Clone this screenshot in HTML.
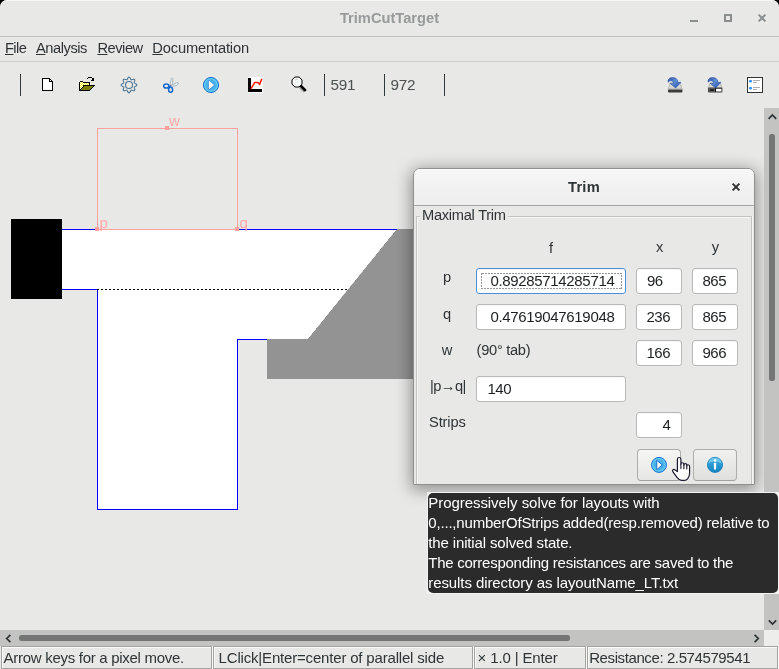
<!DOCTYPE html>
<html lang="en">
<head>
<meta charset="utf-8">
<title>TrimCutTarget</title>
<style>
*{box-sizing:border-box;margin:0;padding:0}
html,body{width:779px;height:669px;overflow:hidden;background:#000}
body{position:relative;font-family:"Liberation Sans","DejaVu Sans",sans-serif;font-size:14.67px;color:#2e3436}
#root{position:absolute;left:0;top:0;width:779px;height:669px;overflow:hidden;will-change:transform;background:#e8e8e7;border-radius:7px 7px 0 0}
.abs{position:absolute}
.t{position:absolute;white-space:pre;line-height:1}
/* window chrome */
#titlebar{left:0;top:0;width:779px;height:37px;background:#e8e8e7;border-bottom:1px solid #bfbfbc;border-radius:7px 7px 0 0;box-shadow:inset 0 1px 0 #f6f6f5}
#title{left:0;width:779px;top:10.5px;text-align:center;font-weight:bold;color:#979a9a;font-size:14.67px}
#menubar{left:0;top:37px;width:779px;height:25px;border-bottom:1px solid #cfcfcd}
.menu{top:41.1px;font-size:14.67px;color:#2e3436}
.menu u{text-decoration:underline;text-underline-offset:1.2px;text-decoration-thickness:1px}
.sep{position:absolute;width:1px;background:#33383a;top:74px;height:22px}
.num{top:76.9px;font-size:15.3px;letter-spacing:-0.35px;color:#4a4f50}
/* canvas */
#canvas{left:0;top:108px;width:764px;height:522px;overflow:hidden}
/* scrollbars */
#vsb{left:764px;top:108px;width:15px;height:522px;background:#c3c3c1}
#hsb{left:0;top:630px;width:764px;height:16px;background:#c3c3c1}
#corner{left:764px;top:630px;width:15px;height:16px;background:#ededec}
.thumb{position:absolute;background:#747676;border-radius:2.5px}
/* status */
.cell{position:absolute;top:646px;height:23px;border:1px solid #a3a3a1;background:#e8e8e7;box-shadow:inset 1px 1px 0 #fbfbfa,1px 1px 0 #fbfbfa}
.cell span{position:absolute;top:3px;white-space:pre;line-height:1;font-size:15px;color:#2e3436}

/* dialog */
#dlg{left:413px;top:168px;width:342px;height:317px;border:1px solid #8f8f8d;border-radius:7px 7px 0 0;background:#e8e8e7;overflow:hidden}
#dlgshadow{left:413px;top:168px;width:342px;height:317px;border-radius:7px 7px 0 0;box-shadow:0 3px 16px 2px rgba(0,0,0,0.38)}
#dlgin{position:absolute;left:-414px;top:-169px;width:779px;height:669px}
#dtb{left:414px;top:169px;width:340px;height:37px;background:linear-gradient(#f7f7f7,#f2f2f2 40%,#eeeeee);border-top:1px solid #fdfdfd;border-bottom:1px solid #a3a3a1}
.lbl{position:absolute;white-space:pre;line-height:1;font-size:14.67px;color:#2e3436}
.fld{position:absolute;height:26px;background:#fff;border:1px solid #b9b9b6;border-radius:3px;box-shadow:inset 0 1px 0 rgba(0,0,0,0.04)}
.fld.foc{border-color:#4a90d9}
.fld span{position:absolute;top:4.3px;white-space:pre;line-height:1;font-size:15px;color:#1c1f20}
.btn{position:absolute;top:449px;width:44px;height:32px;border:1px solid #adadab;border-bottom-color:#a0a09e;border-radius:4px;background:linear-gradient(#f1f1f0,#dfdfde)}

#tipf{left:427px;top:492px;width:352px;height:102px;background:#f3f3f2}
#tip{left:428px;top:493px;width:350px;height:100px;background:#2b2b2b;border-radius:5px}
#tip div{position:absolute;left:0.3px;white-space:pre;line-height:1;font-size:15px;color:#fff}
</style>
</head>
<body>
<div id="root">
<!-- TITLE BAR -->
<div id="titlebar" class="abs"></div>
<div id="title" class="t">TrimCutTarget</div>
<!-- MENU BAR -->
<div id="menubar" class="abs"></div>
<div class="t menu" style="left:5px;letter-spacing:-0.6px"><u>F</u>ile</div>
<div class="t menu" style="left:36px;letter-spacing:-0.45px"><u>A</u>nalysis</div>
<div class="t menu" style="left:97.4px;letter-spacing:-0.45px"><u>R</u>eview</div>
<div class="t menu" style="left:152.3px;letter-spacing:-0.15px"><u>D</u>ocumentation</div>
<!-- TOOLBAR -->
<div id="toolbar" class="abs" style="left:0;top:62px;width:779px;height:46px">
</div>
<div class="sep" style="left:20px"></div>
<div class="sep" style="left:324px"></div>
<div class="sep" style="left:384px"></div>
<div class="sep" style="left:444px"></div>
<div class="t num" style="left:330.6px">591</div>
<div class="t num" style="left:390.6px">972</div>
<svg class="abs" style="left:0;top:62px" width="779" height="46" viewBox="0 62 779 46">
<defs>
<pattern id="dith" x="0" y="0" width="2" height="2" patternUnits="userSpaceOnUse"><rect width="2" height="2" fill="#ffff00"/><rect x="0" y="0" width="1" height="1" fill="#fff"/><rect x="1" y="1" width="1" height="1" fill="#fff"/></pattern>
<radialGradient id="gp" cx="0.5" cy="0.5" r="0.5"><stop offset="0" stop-color="#3a9ee4"/><stop offset="0.6" stop-color="#49b2ec"/><stop offset="1" stop-color="#6ad4f6"/></radialGradient>
<linearGradient id="ga" x1="0" y1="0" x2="1" y2="1"><stop offset="0" stop-color="#2a4fa8"/><stop offset="0.45" stop-color="#5f8fd0"/><stop offset="1" stop-color="#1d48b4"/></linearGradient>
</defs>
<!-- new document -->
<g shape-rendering="crispEdges">
<path d="M42.5 78.5H49.5L52.5 81.5V90.5H42.5Z" fill="#fff" stroke="#000" stroke-width="1"/>
<rect x="49" y="79" width="1" height="3" fill="#000"/><rect x="49" y="81" width="4" height="1" fill="#000"/>
<rect x="50" y="79" width="1" height="1" fill="#000"/><rect x="51" y="80" width="1" height="1" fill="#000"/>
</g>
<!-- open folder -->
<g shape-rendering="crispEdges">
<rect x="80" y="81" width="3" height="1" fill="#000"/>
<polygon points="79,82 90,82 90,85 95,85 94,86 93,87 92,88 91,89 90,90 90,91 79,91" fill="#000"/>
<polygon points="80,82 83,82 83,83 89,83 89,85 83,85 83,87 82,87 82,88 81,88 81,89 80,89" fill="url(#dith)"/>
<polygon points="84,86 93,86 92,87 91,88 90,89 89,90 81,90 82,89 83,88 84,87" fill="#808000"/>
<rect x="84" y="86" width="9" height="1" fill="#808000"/><rect x="83" y="87" width="9" height="1" fill="#808000"/><rect x="82" y="88" width="9" height="1" fill="#808000"/><rect x="81" y="89" width="9" height="1" fill="#808000"/>
<rect x="88" y="77" width="4" height="1" fill="#000"/><rect x="87" y="78" width="1" height="1" fill="#000"/><rect x="92" y="78" width="1" height="1" fill="#000"/>
<rect x="93" y="78" width="1" height="3" fill="#000"/><rect x="92" y="79" width="1" height="2" fill="#000"/><rect x="91" y="80" width="1" height="1" fill="#000"/>
</g>
<!-- gear -->
<path d="M129.00 77.15 L129.50 77.31 L129.95 77.76 L130.32 78.38 L130.60 79.01 L130.86 79.51 L131.16 79.78 L131.56 79.80 L132.10 79.63 L132.75 79.39 L133.44 79.21 L134.08 79.21 L134.55 79.45 L134.79 79.92 L134.79 80.56 L134.61 81.25 L134.37 81.90 L134.20 82.44 L134.22 82.84 L134.49 83.14 L134.99 83.40 L135.62 83.68 L136.24 84.05 L136.69 84.50 L136.85 85.00 L136.69 85.50 L136.24 85.95 L135.62 86.32 L134.99 86.60 L134.49 86.86 L134.22 87.16 L134.20 87.56 L134.37 88.10 L134.61 88.75 L134.79 89.44 L134.79 90.08 L134.55 90.55 L134.08 90.79 L133.44 90.79 L132.75 90.61 L132.10 90.37 L131.56 90.20 L131.16 90.22 L130.86 90.49 L130.60 90.99 L130.32 91.62 L129.95 92.24 L129.50 92.69 L129.00 92.85 L128.50 92.69 L128.05 92.24 L127.68 91.62 L127.40 90.99 L127.14 90.49 L126.84 90.22 L126.44 90.20 L125.90 90.37 L125.25 90.61 L124.56 90.79 L123.92 90.79 L123.45 90.55 L123.21 90.08 L123.21 89.44 L123.39 88.75 L123.63 88.10 L123.80 87.56 L123.78 87.16 L123.51 86.86 L123.01 86.60 L122.38 86.32 L121.76 85.95 L121.31 85.50 L121.15 85.00 L121.31 84.50 L121.76 84.05 L122.38 83.68 L123.01 83.40 L123.51 83.14 L123.78 82.84 L123.80 82.44 L123.63 81.90 L123.39 81.25 L123.21 80.56 L123.21 79.92 L123.45 79.45 L123.92 79.21 L124.56 79.21 L125.25 79.39 L125.90 79.63 L126.44 79.80 L126.84 79.78 L127.14 79.51 L127.40 79.01 L127.68 78.38 L128.05 77.76 L128.50 77.31Z" fill="none" stroke="#3f6c8e" stroke-width="1.05" stroke-linejoin="round" opacity="0.95"/>
<circle cx="129" cy="85" r="3.5" fill="none" stroke="#3f6c8e" stroke-width="1.05" opacity="0.95"/>
<!-- scissors -->
<path d="M170 85.2L171.3 78.4Q172.2 77.2 172.9 78.6L172.6 85.6Z" fill="#e3edf4" stroke="#8b969c" stroke-width="0.6"/>
<path d="M171 85.4L176.6 82.6Q178.8 82.3 178.6 83.7L176.6 85.6L172 86.4Z" fill="#e3edf4" stroke="#8b969c" stroke-width="0.6"/>
<ellipse cx="166.3" cy="86" rx="2.6" ry="2.1" fill="none" stroke="#1769d2" stroke-width="1.5"/>
<ellipse cx="170.6" cy="89.7" rx="2" ry="2.5" fill="none" stroke="#1769d2" stroke-width="1.5"/>
<path d="M168.6 87.3L171 85.6" stroke="#1769d2" stroke-width="1.3"/>
<!-- play -->
<circle cx="211" cy="85" r="7.6" fill="url(#gp)" stroke="#1f6fd0" stroke-width="1"/>
<path d="M208.8 80.4V89.8L214.2 85Z" fill="#fff" stroke="#1767c8" stroke-width="0.7" stroke-linejoin="round"/>
<path d="M208.8 80.6L214 85L208.8 89.6Z" fill="#fff"/>
<!-- chart -->
<g shape-rendering="crispEdges">
<rect x="248" y="77" width="15" height="16" fill="#fff"/>
<rect x="248" y="78" width="3" height="14" fill="#000"/><rect x="248" y="89" width="14" height="3" fill="#000"/>
</g>
<path d="M251.3 88.2L254.6 82.6H258L259.6 84.4L261.6 79.4" fill="none" stroke="#ff1a00" stroke-width="1.5" stroke-linejoin="round" stroke-linecap="round"/>
<!-- magnifier -->
<path d="M301 86L305.6 90.6" stroke="#9a9a9a" stroke-width="3.4" transform="translate(-0.8 0.8)"/>
<path d="M300.4 85.4L305.8 90.8" stroke="#000" stroke-width="2.6"/>
<path d="M294.93 77.00 L299.07 77.00 L302.00 79.93 L302.00 84.07 L299.07 87.00 L294.93 87.00 L292.00 84.07 L292.00 79.93Z" fill="#f6fbf9" stroke="#000" stroke-width="1"/>
<path d="M295 80.2Q296 79.2 297.6 79.3" fill="none" stroke="#999" stroke-width="0.6"/>
<!-- save -->
<path d="M668.4 89.5L670 83H680.4L682 89.5Z" fill="#d6d6d4" stroke="#a8a8a5" stroke-width="0.7"/>
<rect x="668" y="89.3" width="14.4" height="3.2" rx="1" fill="#3b3b3a"/>
<rect x="668" y="88.6" width="14.4" height="1" fill="#a9a9a6"/>
<g transform="translate(0 0)">
<path d="M668 82.3 C667.6 78.2 671 77.2 673.4 77.5 C676.4 77.9 678 79.9 678.3 82.6 L681 82.2 L675.6 88 L670.2 83.4 L673.4 83.2 C673.2 81.5 672.3 80.7 671.2 80.7 C669.8 80.7 669 81.4 668 82.3Z" fill="url(#ga)" stroke="#24479a" stroke-width="0.5"/>
</g>
<!-- save as -->
<path d="M708.4 88L710 83H720.4L722 88Z" fill="#d6d6d4" stroke="#a8a8a5" stroke-width="0.7"/>
<rect x="708" y="87.6" width="14.4" height="5" rx="1" fill="#444"/>
<rect x="709.2" y="88.9" width="5.6" height="2.5" fill="#1c1c1c" stroke="#8a8a8a" stroke-width="0.5"/>
<rect x="716" y="88.9" width="5.4" height="2.5" fill="#fff"/>
<rect x="715" y="87.2" width="1" height="4.8" fill="#111"/>
<g transform="translate(40 0)">
<path d="M668 82.3 C667.6 78.2 671 77.2 673.4 77.5 C676.4 77.9 678 79.9 678.3 82.6 L681 82.2 L675.6 88 L670.2 83.4 L673.4 83.2 C673.2 81.5 672.3 80.7 671.2 80.7 C669.8 80.7 669 81.4 668 82.3Z" fill="url(#ga)" stroke="#24479a" stroke-width="0.5"/>
</g>
<!-- list -->
<rect x="747.5" y="77.5" width="15" height="15" fill="#fff" stroke="#333" stroke-width="1" shape-rendering="crispEdges"/>
<rect x="749" y="80" width="3" height="2.4" rx="1.1" fill="#2d8cff"/>
<rect x="749" y="87" width="3" height="2.4" rx="1.1" fill="#2d8cff"/>
<g fill="#a5a5a5"><rect x="753" y="80" width="7" height="0.9"/><rect x="753" y="82" width="4" height="0.9"/><rect x="753" y="87" width="7" height="0.9"/><rect x="753" y="89" width="4" height="0.9"/></g>
</svg>
<!-- CANVAS -->
<div id="canvas" class="abs">
<svg class="abs" style="left:0;top:0" width="764" height="522" viewBox="0 108 764 522" shape-rendering="crispEdges">
<polygon points="397,229 740,229 740,379 267,379 267,339 308,339" fill="#939393"/>
<polygon points="62,229 397,229 308,339 237,339 237,509 97,509 97,289 62,289" fill="#ffffff"/>
<polygon points="397,229 420,229 420,379 267,379 267,339 308,339" fill="#939393" shape-rendering="geometricPrecision"/>
<rect x="11" y="219" width="51" height="80" fill="#000000"/>
<g fill="none" stroke="#0000ff" stroke-width="1">
<path d="M62 229.5H397"/>
<path d="M62 289.5H97.5V509.5H237.5V339.5H267"/>
</g>
<path d="M97 289.5H349" fill="none" stroke="#000" stroke-width="1" stroke-dasharray="2 2"/>
<g fill="none" stroke="#ffa0a0" stroke-width="1">
<path d="M97.5 229.5V128.5H237.5V229.5Z"/>
</g>
<g fill="#ffa0a0">
<rect x="95" y="227" width="4" height="4"/>
<rect x="235" y="227" width="4" height="4"/>
<rect x="165" y="126" width="4" height="4"/>
</g>
<g fill="#ffa9a9" font-family="'Liberation Sans','DejaVu Sans',sans-serif" font-size="15" shape-rendering="geometricPrecision" text-rendering="geometricPrecision">
<text x="99.5" y="227.5">p</text>
<text x="239.5" y="227.5">q</text>
<text x="169" y="126">w</text>
</g>
</svg>
</div>
<!-- SCROLLBARS -->
<div id="vsb" class="abs"></div>
<div id="hsb" class="abs"></div>
<div id="corner" class="abs"></div>
<div class="thumb" style="left:769px;top:134px;width:6px;height:247px"></div>
<div class="thumb" style="left:19px;top:635px;width:551px;height:6px"></div>
<svg class="abs" style="left:0;top:108px" width="779" height="540" viewBox="0 108 779 540" fill="none" stroke="#2e3436" stroke-width="1.7">
<path d="M768.6 118.8L772.4 115L776.2 118.8"/>
<path d="M768.8 620.3L772.5 624L776.2 620.3"/>
<path d="M10.4 634.8L6.7 638.5L10.4 642.2"/>
<path d="M754.6 634.8L758.3 638.5L754.6 642.2"/>
</svg>

<!-- STATUS BAR -->
<div class="cell" style="left:1px;width:211px"><span style="left:1.6px;letter-spacing:-0.29px">Arrow keys for a pixel move.</span></div>
<div class="cell" style="left:213px;width:260px"><span style="left:4.6px;letter-spacing:-0.18px">LClick|Enter=center of parallel side</span></div>
<div class="cell" style="left:474px;width:112px"><span style="left:2.6px;letter-spacing:-0.14px">× 1.0 | Enter</span></div>
<div class="cell" style="left:587px;width:191px"><span style="left:1.2px;letter-spacing:-0.4px">Resistance: 2.574579541</span></div>
<div class="abs" style="left:0;top:108px;width:764px;height:522px;overflow:hidden"><div id="dlgshadow" class="abs" style="top:60px"></div></div>
<div id="dlg" class="abs"><div id="dlgin">
<div id="dtb" class="abs"></div>
<div class="lbl" id="dtitle" style="left:514px;width:140px;text-align:center;top:179.7px;font-weight:bold;letter-spacing:0.2px">Trim</div>
<svg class="abs" style="left:731px;top:182px" width="10" height="10" viewBox="0 0 10 10"><path d="M1.6 1.6L8.4 8.4M8.4 1.6L1.6 8.4" stroke="#2e3436" stroke-width="2" fill="none"/></svg>
<!-- group frame -->
<div class="abs" style="left:416px;top:216px;width:336px;height:300px;border:1px solid #c3c3c1;box-shadow:inset 1px 1px 0 #f7f7f6,1px 0 0 #f7f7f6"></div>
<div class="abs" style="left:420px;top:214px;width:88px;height:6px;background:#e8e8e7"></div>
<div class="lbl" style="left:422px;top:208.1px;letter-spacing:-0.28px">Maximal Trim</div>
<!-- headers -->
<div class="lbl" style="left:531px;width:40px;text-align:center;top:240.8px">f</div>
<div class="lbl" style="left:639.6px;width:40px;text-align:center;top:240.3px">x</div>
<div class="lbl" style="left:695.5px;width:40px;text-align:center;top:240.3px">y</div>
<!-- row labels -->
<div class="lbl" style="left:417px;width:60px;text-align:center;top:270.3px">p</div>
<div class="lbl" style="left:417px;width:60px;text-align:center;top:307.1px">q</div>
<div class="lbl" style="left:417px;width:60px;text-align:center;top:343.3px">w</div>
<div class="lbl" style="left:430px;top:379.3px;letter-spacing:-0.55px">|p→q|</div>
<div class="lbl" style="left:429px;top:414.9px;letter-spacing:-0.13px">Strips</div>
<div class="lbl" style="left:476.6px;top:342.9px;letter-spacing:-0.3px">(90° tab)</div>
<!-- fields -->
<div class="fld foc" style="left:476px;top:268px;width:150px"><span style="left:13.4px;letter-spacing:-0.33px">0.89285714285714</span>
<svg class="abs" style="left:4px;top:4px" width="141" height="16"><rect x="0.5" y="0.5" width="140" height="15" fill="none" stroke="#949798" stroke-width="1" stroke-dasharray="2 1" shape-rendering="crispEdges"/></svg></div>
<div class="fld" style="left:636px;top:268px;width:46px"><span style="left:10px;letter-spacing:-0.5px">96</span></div>
<div class="fld" style="left:692px;top:268px;width:46px"><span style="left:9.5px;letter-spacing:-0.5px">865</span></div>
<div class="fld" style="left:476px;top:304px;width:150px"><span style="left:13.4px;letter-spacing:-0.33px">0.47619047619048</span></div>
<div class="fld" style="left:636px;top:304px;width:46px"><span style="left:9.5px;letter-spacing:-0.5px">236</span></div>
<div class="fld" style="left:692px;top:304px;width:46px"><span style="left:9.5px;letter-spacing:-0.5px">865</span></div>
<div class="fld" style="left:636px;top:340px;width:46px"><span style="left:9.5px;letter-spacing:-0.5px">166</span></div>
<div class="fld" style="left:692px;top:340px;width:46px"><span style="left:9.5px;letter-spacing:-0.5px">966</span></div>
<div class="fld" style="left:476px;top:376px;width:150px"><span style="left:10.5px;letter-spacing:-0.5px">140</span></div>
<div class="fld" style="left:636px;top:412px;width:46px"><span style="left:25.6px">4</span></div>
<!-- buttons -->
<div class="btn" style="left:637px;background:linear-gradient(#f6f6f5,#e6e6e5)"></div>
<div class="btn" style="left:693px"></div>
<svg class="abs" style="left:637px;top:449px" width="100" height="32" viewBox="637 449 100 32">
<circle cx="659" cy="464.9" r="7.5" fill="url(#gp)" stroke="#1f6fd0" stroke-width="1"/>
<path d="M656.8 460.3V469.7L662.2 464.9Z" fill="#fff" stroke="#1767c8" stroke-width="0.9" stroke-linejoin="round"/>
<circle cx="715" cy="464.9" r="7.6" fill="url(#gi)" stroke="#1a7db8" stroke-width="0.8"/>
<path d="M708.4 463.4A6.7 6.7 0 0 1 721.6 463.4Q715 459.5 708.4 463.4Z" fill="#7fd2f0" opacity="0.75"/>
<circle cx="715" cy="460.5" r="1.25" fill="#fff"/>
<rect x="713.9" y="462.8" width="2.2" height="6.6" rx="0.4" fill="#fff"/>
<defs><linearGradient id="gi" x1="0" y1="0" x2="0" y2="1"><stop offset="0" stop-color="#3fb0e4"/><stop offset="1" stop-color="#1483c2"/></linearGradient></defs>
</svg>
</div></div>

<div id="tipf" class="abs"></div>
<div id="tip" class="abs">
<div style="top:2.2px;letter-spacing:-0.06px">Progressively solve for layouts with</div>
<div style="top:22.2px;letter-spacing:-0.19px">0,...,numberOfStrips added(resp.removed) relative to</div>
<div style="top:42.2px;letter-spacing:-0.14px">the initial solved state.</div>
<div style="top:62.2px;letter-spacing:-0.26px">The corresponding resistances are saved to the</div>
<div style="top:82.2px;letter-spacing:-0.09px">results directory as layoutName_LT.txt</div>
</div>
<svg class="abs" style="left:668px;top:453px" width="26" height="32" viewBox="668 453 26 32">
<path d="M677.4 471.6V459.2C677.4 456.9 680.9 456.9 680.9 459.2V464.2C680.9 462.2 683.9 462.3 683.9 464.4V465.2C683.9 463.1 686.8 463.2 686.8 465.3V466.1C686.8 464.2 689.6 464.3 689.6 466.4V473.2C689.6 476 688.6 477.6 687.6 478.8C686.6 480 685.8 480.3 684.6 480.3H681.4C679.8 480.3 678.4 479.4 677 477.4L672.8 471.6C671.8 470.2 673.6 468.8 674.8 469.8Z" fill="#fff" stroke="#1b1b2f" stroke-width="1.2" stroke-linejoin="round"/>
<path d="M680.9 464V468.6M683.9 465V468.8M686.8 466V469" stroke="#1b1b2f" stroke-width="1.1" fill="none" stroke-linecap="round"/>
</svg>

<svg class="abs" style="left:680px;top:0" width="99" height="36" viewBox="680 0 99 36">
<rect x="690" y="20" width="8" height="2" fill="#8b8e8f"/>
<rect x="725" y="15" width="6" height="6" fill="none" stroke="#8b8e8f" stroke-width="2"/>
<path d="M758.6 14.6L765.4 21.4M765.4 14.6L758.6 21.4" stroke="#8b8e8f" stroke-width="2" fill="none"/>
</svg>

</div>
</body>
</html>
